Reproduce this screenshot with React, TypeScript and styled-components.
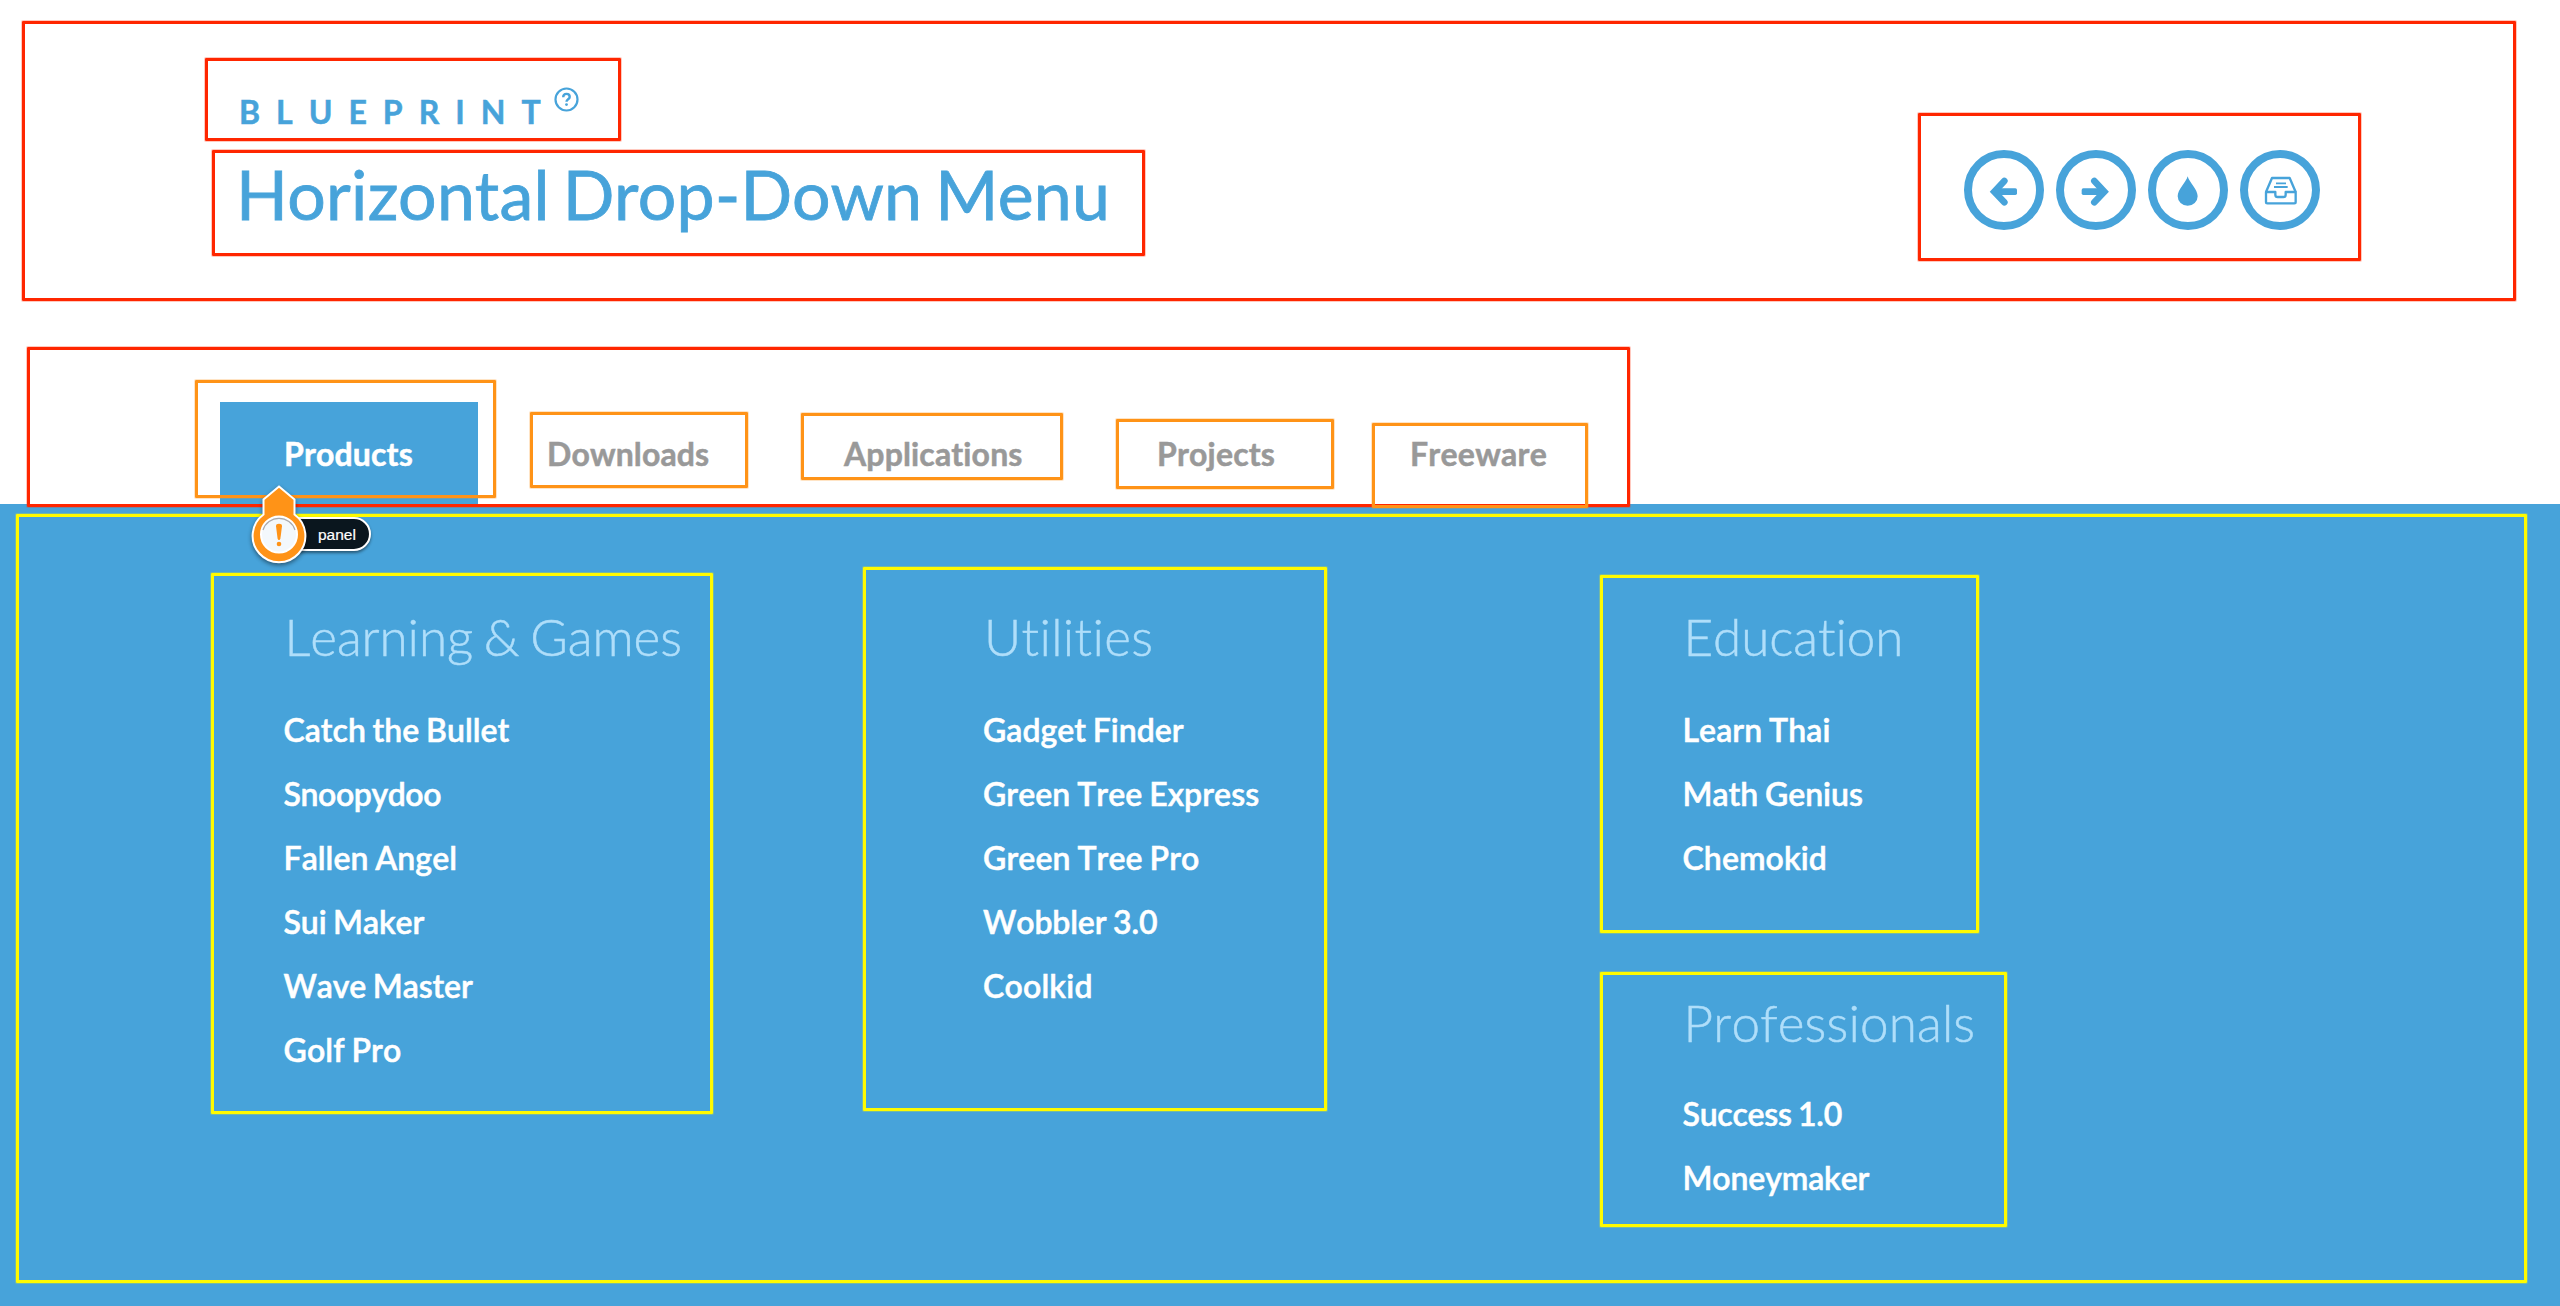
import React from 'react';
import styled, { createGlobalStyle } from 'styled-components';

const blue = '#47a3da';
const red = '#ff2600';
const orange = '#ff9317';
const yellow = '#fffb00';

const GlobalStyle = createGlobalStyle`
  * { box-sizing: border-box; }
  body {
    margin: 0;
    background: #fff;
    font-family: Lato, "Open Sans", sans-serif;
    font-kerning: none;
    font-variant-ligatures: none;
  }
  ul { margin: 0; padding: 0; list-style: none; }
  a { color: inherit; text-decoration: none; }
`;

const Page = styled.div`
  position: relative;
  width: 2560px;
  height: 1306px;
  overflow: hidden;
  display: flex;
  flex-direction: column;
`;

const Header = styled.header`
  height: 402px;
  padding: 92px 240px 0 236px;
  display: flex;
  justify-content: space-between;
  align-items: flex-start;
  color: ${blue};
`;

const Brand = styled.div`
  display: flex;
  align-items: flex-start;
  height: 61px;
  padding-left: 3px;
  font-size: 32px;
  line-height: 39px;
  font-weight: 700;
  letter-spacing: 16px;
  -webkit-text-stroke: 0.5px currentColor;
`;

const HelpIcon = styled.svg`
  width: 25px;
  height: 25px;
  margin: -5px 0 0 -3px;
`;

const Title = styled.h1`
  margin: 0;
  font-size: 68px;
  line-height: 81px;
  font-weight: 400;
  font-kerning: normal;
  letter-spacing: 0.3px;
  word-spacing: -4.8px;
  -webkit-text-stroke: 0.8px currentColor;
`;

const DemoNav = styled.nav`
  display: flex;
  gap: 12px;
  margin-top: 58px;
`;

const RoundButton = styled.a`
  width: 80px;
  height: 80px;
  border: 8px solid ${blue};
  border-radius: 50%;
`;

const Glyph = styled.svg`
  display: block;
  width: 80px;
  height: 80px;
  margin: -8px;
  fill: none;
  stroke: ${blue};
`;

const Tabs = styled.ul`
  display: flex;
  gap: 5px;
  height: 102px;
  padding-left: 220px;
`;

const Tab = styled.li<{ $width: number; $tracking: number; $open?: boolean }>`
  width: ${p => p.$width}px;
  padding: 32px 0 0 64px;
  font-size: 32px;
  line-height: 39px;
  font-weight: 700;
  white-space: nowrap;
  letter-spacing: ${p => p.$tracking}px;
  color: ${p => (p.$open ? '#fff' : '#999')};
  background: ${p => (p.$open ? blue : 'transparent')};
  -webkit-text-stroke: 0.5px currentColor;
`;

const Panel = styled.section`
  flex: 1;
  display: grid;
  grid-template-columns: repeat(3, 699.5px);
  align-items: start;
  padding: 101px 0 0 283.5px;
  background: ${blue};
  color: #fff;
`;

const Column = styled.div`
  display: flex;
  flex-direction: column;
  gap: 101px;
`;

const Heading = styled.h4<{ $tracking: number; $gap: number }>`
  margin: 0 0 ${p => p.$gap}px;
  padding-left: 1px;
  font-size: 51.2px;
  line-height: 62px;
  font-weight: 300;
  letter-spacing: ${p => p.$tracking}px;
  word-spacing: -3px;
  color: #afdefa;
  -webkit-text-stroke: 0.5px currentColor;
`;

const Item = styled.li<{ $tracking: number }>`
  height: 64px;
  font-size: 32px;
  line-height: 64px;
  font-weight: 600;
  white-space: nowrap;
  letter-spacing: ${p => p.$tracking}px;
  word-spacing: -1.2px;
  -webkit-text-stroke: 0.5px currentColor;
`;

const Mark = styled.div<{ $color: string; $x: number; $y: number; $w: number; $h: number }>`
  position: absolute;
  left: ${p => p.$x}px;
  top: ${p => p.$y}px;
  width: ${p => p.$w}px;
  height: ${p => p.$h}px;
  border: 3px solid ${p => p.$color};
  border-radius: 1px;
  box-shadow: 0 0 0 1px ${p => p.$color}40;
  pointer-events: none;
`;

const Callout = styled.div`
  position: absolute;
  left: 250px;
  top: 483px;
  width: 124px;
  height: 84px;
`;

const CalloutLabel = styled.span`
  position: absolute;
  left: 30px;
  top: 34px;
  width: 91px;
  height: 34px;
  padding-left: 36px;
  border: 2px solid #fff;
  border-radius: 17px;
  background: #0a161e;
  color: #fff;
  font: 15.5px/32px "Liberation Sans", Arial, sans-serif;
  -webkit-text-stroke: 0.2px currentColor;
  box-shadow: 0 2px 3px rgba(0, 0, 0, 0.45);
`;

const CalloutPin = styled.svg`
  position: absolute;
  left: 0;
  top: 0;
  overflow: visible;
  filter: drop-shadow(0 2px 2px rgba(0, 0, 0, 0.45));
`;

type Text = [label: string, tracking: number];
type Group = { title: Text; gap: number; items: Text[] };

const tabs: [label: string, width: number, tracking: number][] = [
  ['Products', 258, 0.14],
  ['Downloads', 292, 0.1],
  ['Applications', 308, 0.14],
  ['Projects', 248, 0.16],
  ['Freeware', 262, 0.23],
];

const columns: Group[][] = [
  [{
    title: ['Learning & Games', -0.1],
    gap: 31,
    items: [
      ['Catch the Bullet', 0],
      ['Snoopydoo', -0.42],
      ['Fallen Angel', 0.06],
      ['Sui Maker', -0.12],
      ['Wave Master', -0.12],
      ['Golf Pro', 0.1],
    ],
  }],
  [{
    title: ['Utilities', 0.35],
    gap: 31,
    items: [
      ['Gadget Finder', 0],
      ['Green Tree Express', 0.07],
      ['Green Tree Pro', 0.1],
      ['Wobbler 3.0', -0.13],
      ['Coolkid', 0.2],
    ],
  }],
  [
    {
      title: ['Education', -0.08],
      gap: 31,
      items: [
        ['Learn Thai', 0.08],
        ['Math Genius', -0.02],
        ['Chemokid', 0.08],
      ],
    },
    {
      title: ['Professionals', 0.15],
      gap: 29,
      items: [
        ['Success 1.0', -0.28],
        ['Moneymaker', -0.14],
      ],
    },
  ],
];

const marks: [color: string, x: number, y: number, w: number, h: number][] = [
  [red, 22, 21, 2494, 280],
  [red, 205, 58, 416, 83],
  [red, 212, 150, 933, 106],
  [red, 1918, 113, 443, 148],
  [red, 27, 347, 1603, 160],
  [orange, 195, 380, 301, 118],
  [orange, 530, 412, 218, 76],
  [orange, 801, 413, 262, 67],
  [orange, 1116, 419, 218, 70],
  [orange, 1372, 423, 216, 85],
  [yellow, 16, 514, 2511, 769],
  [yellow, 211, 573, 502, 541],
  [yellow, 863, 567, 464, 544],
  [yellow, 1600, 575, 379, 358],
  [yellow, 1600, 972, 407, 255],
];

const Help = () => (
  <HelpIcon viewBox="0 0 25 25" fill="none" stroke={blue}>
    <circle cx="12.5" cy="12.5" r="11" strokeWidth="2.2" />
    <path d="M9.2 10.2c0-2.1 1.4-3.3 3.3-3.3s3.2 1.2 3.2 3c0 2.3-3.2 2.4-3.2 4.9" strokeWidth="2.4" />
    <circle cx="12.5" cy="17.6" r="1.4" fill={blue} stroke="none" />
  </HelpIcon>
);

const ArrowLeft = () => (
  <Glyph viewBox="0 0 240 240">
    <path d="M121 93 L91 125 L121 157" strokeWidth="20" strokeLinecap="round" />
    <rect x="92" y="115" width="67" height="20" rx="5" fill={blue} stroke="none" />
  </Glyph>
);

const ArrowRight = () => (
  <Glyph viewBox="0 0 240 240">
    <path d="M115 93 L145 125 L115 157" strokeWidth="20" strokeLinecap="round" />
    <rect x="77" y="115" width="67" height="20" rx="5" fill={blue} stroke="none" />
  </Glyph>
);

const Drop = () => (
  <Glyph viewBox="0 0 240 240">
    <path
      d="M119 79C124 98 149 118 149 139A30 28 0 0 1 89 139C89 118 114 98 119 79Z"
      fill={blue}
      stroke="none"
    />
  </Glyph>
);

const Archive = () => (
  <Glyph viewBox="0 0 240 240" strokeWidth="7" strokeLinejoin="round">
    <path d="M78 126H106V134Q106 141 113 141H130Q137 141 137 134V126H167V156Q167 160 163 160H82Q78 160 78 156Z" />
    <path d="M78 126L96 84H149L167 126" />
    <path d="M108 100H138M102 111H143" strokeWidth="5.5" />
  </Glyph>
);

export default function App() {
  return (
    <Page>
      <GlobalStyle />
      <Header>
        <div>
          <Brand>BLUEPRINT<Help /></Brand>
          <Title>Horizontal Drop-Down Menu</Title>
        </div>
        <DemoNav>
          {[ArrowLeft, ArrowRight, Drop, Archive].map((Icon, i) => (
            <RoundButton key={i}><Icon /></RoundButton>
          ))}
        </DemoNav>
      </Header>

      <Tabs>
        {tabs.map(([label, width, tracking], i) => (
          <Tab key={label} $width={width} $tracking={tracking} $open={i === 0}>{label}</Tab>
        ))}
      </Tabs>

      <Panel>
        {columns.map((groups, i) => (
          <Column key={i}>
            {groups.map(({ title, gap, items }) => (
              <div key={title[0]}>
                <Heading $tracking={title[1]} $gap={gap}>{title[0]}</Heading>
                <ul>
                  {items.map(([label, tracking]) => (
                    <Item key={label} $tracking={tracking}>{label}</Item>
                  ))}
                </ul>
              </div>
            ))}
          </Column>
        ))}
      </Panel>

      {marks.map(([color, x, y, w, h], i) => (
        <Mark key={i} $color={color} $x={x} $y={y} $w={w} $h={h} />
      ))}

      <Callout>
        <CalloutLabel>panel</CalloutLabel>
        <CalloutPin width="60" height="84" viewBox="0 0 60 84">
          <path
            d="M29 3.6L44.5 16.5V31.5A26.4 26.4 0 1 1 13.5 31.5V16.5Z"
            fill={orange}
            stroke="#fff"
            strokeWidth="2"
          />
          <circle cx="29" cy="51.5" r="18" fill="#f3f8fc" stroke="#fff" strokeWidth="2" />
          <path d="M13 47A16.8 16.8 0 0 1 45 47" fill="none" stroke="#a9a9ad" strokeWidth="1.2" />
          <path d="M26 43.2Q26 40.8 29 40.8T32 43.2L30.4 55.5Q30 57 29 57T27.6 55.5Z" fill={orange} />
          <circle cx="29" cy="61" r="2.3" fill={orange} />
        </CalloutPin>
      </Callout>
    </Page>
  );
}
